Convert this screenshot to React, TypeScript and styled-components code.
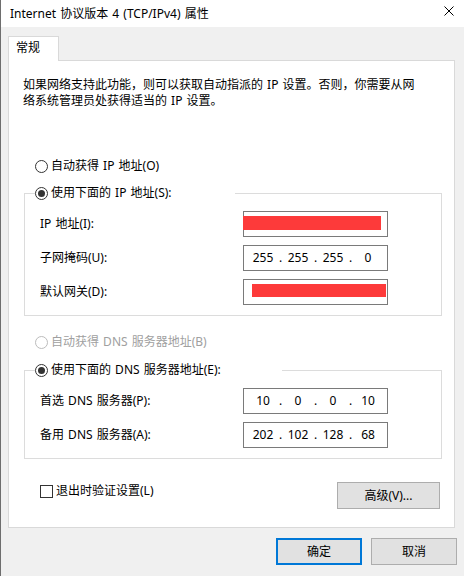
import React from 'react';
import styled, { createGlobalStyle } from 'styled-components';

const GlobalStyle = createGlobalStyle`
  body {
    margin: 0;
    background: #f0f0f0;
  }
  * {
    box-sizing: border-box;
  }
`;

const Window = styled.div`
  width: 464px;
  height: 576px;
  background: #f0f0f0;
  border-left: 1px solid #6e6e6e;
  font-family: 'Noto Sans', 'Noto Sans CJK SC', sans-serif;
  font-size: 12px;
  line-height: 16px;
  word-spacing: 1px;
  color: #000;
  display: flex;
  flex-direction: column;
  overflow: hidden;
`;

const TitleBar = styled.div`
  height: 27px;
  flex-shrink: 0;
  background: #fff;
  display: flex;
  align-items: center;
  justify-content: space-between;
  padding: 0 10px 0 9px;
`;

const CloseIcon = styled.svg`
  align-self: flex-start;
  margin-top: 6px;
`;

const Body = styled.div`
  padding: 9px 0 0 7px;
  display: flex;
  flex-direction: column;
`;

const TabStrip = styled.div`
  display: flex;
  position: relative;
  z-index: 1;
  margin-bottom: -1px;
`;

const Tab = styled.div`
  width: 51px;
  height: 25px;
  background: #fff;
  border: 1px solid #d9d9d9;
  border-bottom: none;
  padding: 3px 0 0 7px;
`;

const Panel = styled.div`
  width: 447px;
  height: 468px;
  background: #fff;
  border: 1px solid #d9d9d9;
  padding: 16px 13px 0 14px;
  display: flex;
  flex-direction: column;
`;

const Description = styled.p`
  margin: 0;
  line-height: 16px;
  white-space: nowrap;
`;

const RadioRow = styled.label<{ $disabled?: boolean; $top?: number; $indent?: number }>`
  display: flex;
  align-items: center;
  gap: 3px;
  height: 16px;
  margin-top: ${p => p.$top ?? 0}px;
  margin-left: ${p => p.$indent ?? 0}px;
  color: ${p => (p.$disabled ? '#a0a0a0' : '#000')};
  white-space: nowrap;
`;

const RadioCircle = styled.span<{ $checked?: boolean; $disabled?: boolean }>`
  width: 13px;
  height: 13px;
  border-radius: 50%;
  border: 1px solid ${p => (p.$disabled ? '#bcbcbc' : '#333')};
  background: #fff;
  display: flex;
  align-items: center;
  justify-content: center;

  &::after {
    content: '';
    display: ${p => (p.$checked ? 'block' : 'none')};
    width: 7px;
    height: 7px;
    border-radius: 50%;
    background: #333;
  }
`;

const GroupBox = styled.fieldset<{ $top: number }>`
  margin: ${p => p.$top}px 0 0 1px;
  padding: 0 0 10px 0;
  width: 418px;
  min-width: 0;
  border: 1px solid #dcdcdc;
`;

const GroupLegend = styled.legend<{ $width: number }>`
  padding: 0;
  margin-left: 10px;
  width: ${p => p.$width}px;
`;

const FieldGrid = styled.div`
  display: grid;
  grid-template-columns: 203px 145px;
  grid-auto-rows: 26px;
  row-gap: 8px;
  align-items: center;
  margin: 10px 0 0 15px;
`;

const FieldLabel = styled.span`
  white-space: nowrap;
`;

const IpBox = styled.div`
  height: 26px;
  border: 1px solid #7a7a7a;
  background: #fff;
  display: flex;
  align-items: center;
`;

const Octets = styled.div`
  display: flex;
  padding-left: 6px;
`;

const Octet = styled.span`
  width: 26px;
  text-align: center;
`;

const Dot = styled.span`
  width: 9px;
  text-align: center;
`;

const Redaction = styled.span<{ $left: number; $width: number; $height: number }>`
  align-self: flex-start;
  margin: 4px 0 0 ${p => p.$left}px;
  width: ${p => p.$width}px;
  height: ${p => p.$height}px;
  background: #fd3a3a;
`;

const BottomRow = styled.div`
  display: flex;
  align-items: flex-start;
  justify-content: space-between;
  margin: 23px 1px 0 17px;
`;

const CheckRow = styled.label`
  display: flex;
  align-items: center;
  gap: 3px;
  margin-top: 1px;
  white-space: nowrap;
`;

const CheckBox = styled.span`
  width: 13px;
  height: 13px;
  border: 1px solid #333;
  background: #fff;
`;

const Button = styled.button<{ $width: number; $default?: boolean }>`
  width: ${p => p.$width}px;
  height: 27px;
  padding: 0;
  background: #e1e1e1;
  border: ${p => (p.$default ? '2px solid #0078d7' : '1px solid #adadad')};
  font: inherit;
  word-spacing: inherit;
  color: #000;
`;

const Footer = styled.div`
  display: flex;
  justify-content: flex-end;
  gap: 9px;
  margin-top: 10px;
  padding-right: 7px;
`;

type IpValue = string[] | { left: number; width: number; height: number };

const IpField = ({ value }: { value: IpValue }) => (
  <IpBox>
    {Array.isArray(value) ? (
      <Octets>
        {value.map((o, i) => (
          <React.Fragment key={i}>
            {i > 0 && <Dot>.</Dot>}
            <Octet>{o}</Octet>
          </React.Fragment>
        ))}
      </Octets>
    ) : (
      <Redaction $left={value.left} $width={value.width} $height={value.height} />
    )}
  </IpBox>
);

const ipRows: { label: string; value: IpValue }[] = [
  { label: 'IP 地址(I):', value: { left: -1, width: 138, height: 14 } },
  { label: '子网掩码(U):', value: ['255', '255', '255', '0'] },
  { label: '默认网关(D):', value: { left: 8, width: 134, height: 13 } },
];

const dnsRows: { label: string; value: IpValue }[] = [
  { label: '首选 DNS 服务器(P):', value: ['10', '0', '0', '10'] },
  { label: '备用 DNS 服务器(A):', value: ['202', '102', '128', '68'] },
];

export default function App() {
  return (
    <>
      <GlobalStyle />
      <Window>
        <TitleBar>
          <span>Internet 协议版本 4 (TCP/IPv4) 属性</span>
          <CloseIcon width="10" height="10" viewBox="0 0 10 10">
            <path d="M0.5 0.5 L9.5 9.5 M9.5 0.5 L0.5 9.5" stroke="#000" strokeWidth="1" />
          </CloseIcon>
        </TitleBar>
        <Body>
          <TabStrip>
            <Tab>常规</Tab>
          </TabStrip>
          <Panel>
            <Description>
              如果网络支持此功能，则可以获取自动指派的 IP 设置。否则，你需要从网
              <br />
              络系统管理员处获得适当的 IP 设置。
            </Description>

            <RadioRow $top={49} $indent={12}>
              <RadioCircle />
              自动获得 IP 地址(O)
            </RadioRow>

            <GroupBox $top={11}>
              <GroupLegend $width={200}>
                <RadioRow>
                  <RadioCircle $checked />
                  使用下面的 IP 地址(S):
                </RadioRow>
              </GroupLegend>
              <FieldGrid>
                {ipRows.map(r => (
                  <React.Fragment key={r.label}>
                    <FieldLabel>{r.label}</FieldLabel>
                    <IpField value={r.value} />
                  </React.Fragment>
                ))}
              </FieldGrid>
            </GroupBox>

            <RadioRow $top={18} $indent={12} $disabled>
              <RadioCircle $disabled />
              自动获得 DNS 服务器地址(B)
            </RadioRow>

            <GroupBox $top={12}>
              <GroupLegend $width={247}>
                <RadioRow>
                  <RadioCircle $checked />
                  使用下面的 DNS 服务器地址(E):
                </RadioRow>
              </GroupLegend>
              <FieldGrid>
                {dnsRows.map(r => (
                  <React.Fragment key={r.label}>
                    <FieldLabel>{r.label}</FieldLabel>
                    <IpField value={r.value} />
                  </React.Fragment>
                ))}
              </FieldGrid>
            </GroupBox>

            <BottomRow>
              <CheckRow>
                <CheckBox />
                退出时验证设置(L)
              </CheckRow>
              <Button $width={103}>高级(V)...</Button>
            </BottomRow>
          </Panel>
          <Footer>
            <Button $width={86} $default>
              确定
            </Button>
            <Button $width={86}>取消</Button>
          </Footer>
        </Body>
      </Window>
    </>
  );
}
